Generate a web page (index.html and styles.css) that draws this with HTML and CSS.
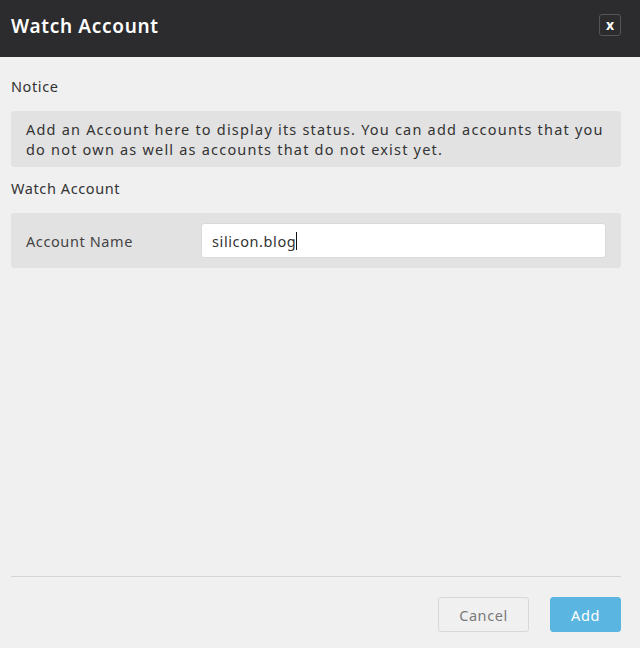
FILE: index.html
```html
<!DOCTYPE html>
<html>
<head>
<meta charset="utf-8">
<link rel="stylesheet" href="styles.css">
</head>
<body>
<div class="dialog">
  <header class="head">
    <h1 class="title">Watch Account</h1>
    <button class="close">x</button>
  </header>
  <main class="content">
    <div class="section-label notice-label">Notice</div>
    <div class="notice">Add an Account here to display its status. You can add accounts that you do not own as well as accounts that do not exist yet.</div>
    <div class="section-label watch-label">Watch Account</div>
    <div class="form-row">
      <label class="field-label">Account Name</label>
      <div class="input"><span>silicon.blog</span><span class="caret"></span></div>
    </div>
  </main>
  <footer class="foot">
    <button class="btn cancel">Cancel</button>
    <button class="btn add">Add</button>
  </footer>
</div>
</body>
</html>
```
FILE: styles.css
```css
* { box-sizing: border-box; }
html, body { margin: 0; padding: 0; }
body {
  width: 640px;
  height: 648px;
  background: #f0f0f0;
  font-family: "Noto Sans", "Open Sans", sans-serif;
  color: #333;
  font-size: 14px;
  letter-spacing: 0.6px;
}
.dialog {
  height: 648px;
  display: flex;
  flex-direction: column;
}
.head {
  height: 57px;
  background: #2c2c2e;
  display: flex;
  align-items: center;
  justify-content: space-between;
  padding: 0 19px 0 11px;
  flex-shrink: 0;
}
.title {
  margin: 0;
  color: #fff;
  font-size: 19px;
  font-weight: 600;
  letter-spacing: 0.7px;
  position: relative;
  top: -3px;
}
.close {
  width: 22px;
  height: 22px;
  margin-top: -7px;
  background: transparent;
  border: 1px solid #555;
  border-radius: 3px;
  color: #fff;
  font-family: inherit;
  font-weight: 700;
  font-size: 14px;
  line-height: 18px;
  padding: 0;
  letter-spacing: 0;
}
.content {
  flex: 1;
  padding: 0 19px 0 11px;
}
.section-label {
  font-size: 14.5px;
  line-height: 20px;
  color: #333;
}
.notice-label { margin-top: 19px; }
.notice {
  margin-top: 15px;
  background: #e2e2e2;
  border-radius: 3px;
  padding: 8px 8px 8px 15px;
  font-size: 14.5px;
  line-height: 20px;
  letter-spacing: 1.2px;
  color: #333;
  width: 610px;
}
.watch-label { margin-top: 11px; }
.form-row {
  margin-top: 15px;
  width: 610px;
  height: 55px;
  background: #e2e2e2;
  border-radius: 3px;
  display: flex;
  align-items: center;
  padding: 0 15px;
}
.field-label {
  width: 175px;
  font-size: 14.5px;
  color: #444;
}
.input {
  width: 405px;
  height: 35px;
  background: #fff;
  border: 1px solid #dadada;
  border-radius: 3px;
  display: flex;
  align-items: center;
  padding-left: 10px;
  font-size: 14.5px;
  color: #333;
}
.caret {
  display: inline-block;
  width: 1px;
  height: 18px;
  background: #111;
  margin-left: 0;
}
.foot {
  flex-shrink: 0;
  margin: 0 19px 16px 11px;
  border-top: 1px solid #d4d4d4;
  padding-top: 20px;
  display: flex;
  justify-content: flex-end;
  gap: 21px;
}
.btn {
  height: 35px;
  border-radius: 3px;
  font-family: inherit;
  font-size: 14.5px;
  letter-spacing: 0.6px;
  padding: 0;
}
.cancel {
  width: 91px;
  background: transparent;
  border: 1px solid #d8d8d8;
  color: #7a7a7a;
}
.add {
  width: 71px;
  background: #5ab5e0;
  border: 1px solid #5ab5e0;
  color: #fff;
}
```
